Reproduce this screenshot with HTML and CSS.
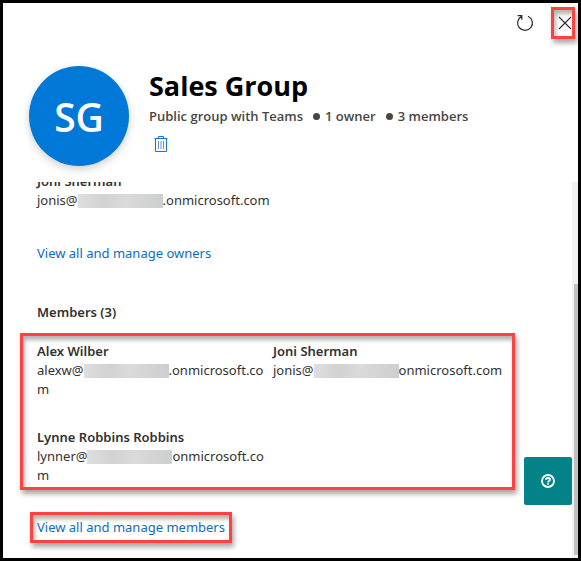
FILE: index.html
```html
<!DOCTYPE html>
<html lang="en">
<head>
<meta charset="utf-8">
<title>Sales Group</title>
<link rel="stylesheet" href="styles.css">
</head>
<body>
<main class="panel">
  <div class="toolbar">
    <button class="icon-button" type="button" aria-label="Refresh">
      <svg width="18" height="18" viewBox="0 0 18 18" fill="none" stroke="#2b2b3a" stroke-width="1.2"><path d="M5.6 2.4A7.4 7.4 0 1 0 12 2.2M1.6 1.6H5.8V5.8"/></svg>
    </button>
    <button class="icon-button marked close" type="button" aria-label="Close">
      <svg width="14" height="14" viewBox="0 0 14 14" fill="none" stroke="#2b2b3a" stroke-width="1.1"><path d="M1 1L13 13M13 1L1 13"/></svg>
    </button>
  </div>
  <header class="profile">
    <div class="avatar">SG</div>
    <div class="summary">
      <h1 class="title">Sales Group</h1>
      <p class="facts"><span>Public group with Teams</span><span class="fact">1 owner</span><span class="fact">3 members</span></p>
      <button class="icon-button delete" type="button" aria-label="Delete group">
        <svg width="14" height="16" viewBox="0 0 14 16" fill="none" stroke="#1b75d0"><path d="M0.5 2.5H13.5M4.5 2.5V0.5H9.5V2.5M1.5 2.5V15.5H12.5V2.5"/><path stroke="#6a8fd8" d="M4.5 5V13M7 5V13M9.5 5V13"/></svg>
      </button>
    </div>
  </header>
  <div class="body">
    <div class="content">
      <section class="owners">
        <div class="person"><strong>Joni Sherman</strong><span>jonis@<i class="redacted"></i>.onmicrosoft.com</span></div>
        <a class="link" href="#owners">View all and manage owners</a>
      </section>
      <h2 class="heading">Members (3)</h2>
      <section class="members marked">
        <div class="person"><strong>Alex Wilber</strong><span>alexw@<i class="redacted"></i>.onmicrosoft.com</span></div>
        <div class="person"><strong>Joni Sherman</strong><span>jonis@<i class="redacted"></i>onmicrosoft.com</span></div>
        <div class="person"><strong>Lynne Robbins Robbins</strong><span>lynner@<i class="redacted"></i>onmicrosoft.com</span></div>
      </section>
      <a class="link marked manage" href="#members">View all and manage members</a>
    </div>
    <div class="scrollbar"><div class="thumb"></div></div>
    <button class="help" type="button" aria-label="Help">
      <svg width="16" height="16" viewBox="0 0 16 16" fill="none" stroke="#fff" stroke-width="1.8"><circle cx="8" cy="8" r="6"/><path d="M6 6.8Q6 5 8 5T10 6.7Q10 7.5 9 8T8 9.4M8 10.2V11.8"/></svg>
    </button>
  </div>
</main>
</body>
</html>
```
FILE: styles.css
```css
* { box-sizing: border-box; }
body {
  margin: 0;
  font-family: "Open Sans", "Noto Sans", sans-serif;
  font-size: 13px;
  line-height: 19px;
  color: #323130;
}
h1, h2, p { margin: 0; }
button { border: 0; padding: 0; background: none; cursor: pointer; }
svg { display: block; }
.panel {
  display: flex;
  flex-direction: column;
  height: 100vh;
  border: 3px solid #000;
  background: #fff;
}
.marked {
  border: 3px solid #fb4343;
  box-shadow: 2px 4px 5px rgba(0, 0, 0, .35), inset 2px 4px 4px rgba(0, 0, 0, .3);
}
.toolbar {
  display: flex;
  justify-content: flex-end;
  align-items: center;
  gap: 17px;
  padding: 4px 3px 0 0;
}
.close {
  display: flex;
  align-items: center;
  justify-content: flex-end;
  width: 24px;
  height: 32px;
}
.close svg { flex: none; }
.profile {
  display: flex;
  gap: 20px;
  height: 143px;
  flex: none;
  padding: 27px 26px 0;
}
.avatar {
  display: flex;
  align-items: center;
  justify-content: center;
  flex: none;
  width: 100px;
  height: 100px;
  border-radius: 50%;
  background: #0078d7;
  box-shadow: 0 3px 8px rgba(0, 0, 0, .2);
  color: #fff;
  font-size: 39px;
  font-weight: 600;
}
.title {
  font-size: 27px;
  line-height: 39px;
  font-weight: 700;
  color: #000;
}
.facts {
  display: flex;
  gap: 10px;
  font-weight: 600;
  line-height: 22px;
  color: #484644;
}
.fact { display: flex; align-items: center; gap: 5px; }
.fact::before {
  content: "";
  width: 7px;
  height: 7px;
  border-radius: 50%;
  background: #484644;
}
.delete { margin: 9px 0 0 5px; }
.body {
  position: relative;
  display: flex;
  flex: 1;
  min-height: 0;
  overflow: hidden;
}
.content {
  flex: 1;
  min-width: 0;
  margin-top: -10px;
  padding-left: 17px;
  font-family: "Noto Sans", "Open Sans", sans-serif;
}
.owners { padding-left: 17px; }
.person strong, .person span { display: block; }
.person strong { font-weight: 600; }
.person span { word-break: break-all; }
.redacted {
  display: inline-block;
  width: 85px;
  height: 14px;
  vertical-align: -3px;
  background: linear-gradient(90deg, #dedede, #d2d2d2 30%, #dadada 55%, #cdcecf);
}
.link { color: #0f6cbd; text-decoration: none; }
.owners .link { display: block; margin-top: 34px; }
.heading {
  margin: 40px 0 11px;
  padding-left: 17px;
  font-size: 13px;
  line-height: 19px;
  font-weight: 600;
}
.members {
  display: grid;
  grid-template-columns: 1fr 1fr;
  row-gap: 29px;
  margin-right: 57px;
  padding: 6px 3px 2px 14px;
}
.manage {
  display: block;
  width: fit-content;
  margin: 22px 0 0 10px;
  padding: 3px 4px;
}
.scrollbar {
  flex: none;
  width: 6px;
  padding: 102px 0 3px 2px;
  background: #f1f1f1;
}
.thumb { height: 100%; background: #c1c1c1; }
.help {
  position: absolute;
  right: 6px;
  bottom: 53px;
  display: flex;
  align-items: center;
  justify-content: center;
  width: 48px;
  height: 48px;
  border-radius: 2px;
  background: #038387;
}
```
